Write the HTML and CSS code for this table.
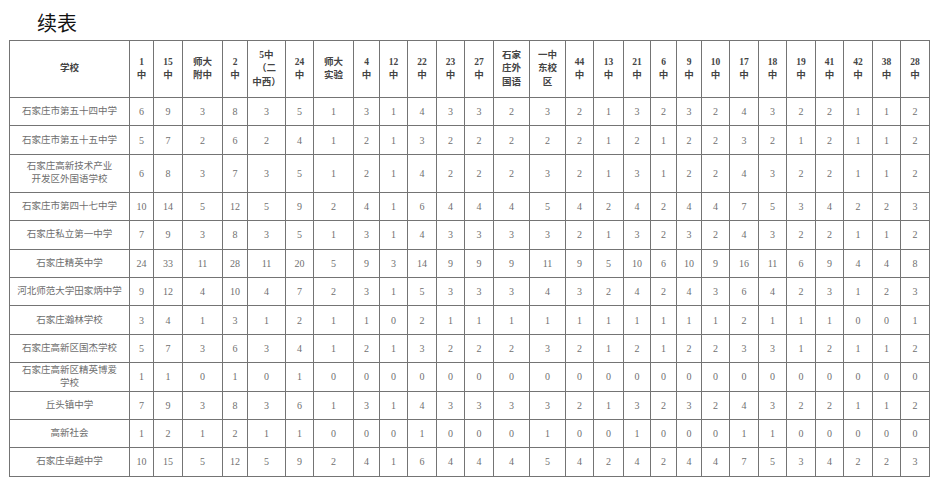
FILE: index.html
```html
<!DOCTYPE html>
<html lang="zh">
<head>
<meta charset="utf-8">
<title>续表</title>
<link rel="stylesheet" href="styles.css">
</head>
<body>
<div class="page">
<div class="title">续表</div>
<table class="grid">
<colgroup>
<col style="width:120px"><col style="width:24px"><col style="width:29px"><col style="width:40px"><col style="width:25px"><col style="width:38px"><col style="width:28px"><col style="width:40px"><col style="width:26px"><col style="width:28px"><col style="width:29px"><col style="width:28px"><col style="width:29px"><col style="width:36px"><col style="width:36px"><col style="width:28px"><col style="width:30px"><col style="width:27px"><col style="width:26px"><col style="width:25px"><col style="width:28px"><col style="width:29px"><col style="width:28px"><col style="width:29px"><col style="width:28px"><col style="width:29px"><col style="width:28px"><col style="width:29px">
</colgroup>
<thead>
<tr class="head">
<th>学校</th><th>1<br>中</th><th>15<br>中</th><th>师大<br>附中</th><th>2<br>中</th><th>5中<br>（二<br>中西）</th><th>24<br>中</th><th>师大<br>实验</th><th>4<br>中</th><th>12<br>中</th><th>22<br>中</th><th>23<br>中</th><th>27<br>中</th><th>石家<br>庄外<br>国语</th><th>一中<br>东校<br>区</th><th>44<br>中</th><th>13<br>中</th><th>21<br>中</th><th>6<br>中</th><th>9<br>中</th><th>10<br>中</th><th>17<br>中</th><th>18<br>中</th><th>19<br>中</th><th>41<br>中</th><th>42<br>中</th><th>38<br>中</th><th>28<br>中</th>
</tr>
</thead>
<tbody>
<tr><td class="name">石家庄市第五十四中学</td><td>6</td><td>9</td><td>3</td><td>8</td><td>3</td><td>5</td><td>1</td><td>3</td><td>1</td><td>4</td><td>3</td><td>3</td><td>2</td><td>3</td><td>2</td><td>1</td><td>3</td><td>2</td><td>3</td><td>2</td><td>4</td><td>3</td><td>2</td><td>2</td><td>1</td><td>1</td><td>2</td></tr>
<tr><td class="name">石家庄市第五十五中学</td><td>5</td><td>7</td><td>2</td><td>6</td><td>2</td><td>4</td><td>1</td><td>2</td><td>1</td><td>3</td><td>2</td><td>2</td><td>2</td><td>2</td><td>2</td><td>1</td><td>2</td><td>1</td><td>2</td><td>2</td><td>3</td><td>2</td><td>1</td><td>2</td><td>1</td><td>1</td><td>2</td></tr>
<tr class="tall"><td class="name">石家庄高新技术产业<br>开发区外国语学校</td><td>6</td><td>8</td><td>3</td><td>7</td><td>3</td><td>5</td><td>1</td><td>2</td><td>1</td><td>4</td><td>2</td><td>2</td><td>2</td><td>3</td><td>2</td><td>1</td><td>3</td><td>1</td><td>2</td><td>2</td><td>4</td><td>3</td><td>2</td><td>2</td><td>1</td><td>1</td><td>2</td></tr>
<tr><td class="name">石家庄市第四十七中学</td><td>10</td><td>14</td><td>5</td><td>12</td><td>5</td><td>9</td><td>2</td><td>4</td><td>1</td><td>6</td><td>4</td><td>4</td><td>4</td><td>5</td><td>4</td><td>2</td><td>4</td><td>2</td><td>4</td><td>4</td><td>7</td><td>5</td><td>3</td><td>4</td><td>2</td><td>2</td><td>3</td></tr>
<tr><td class="name">石家庄私立第一中学</td><td>7</td><td>9</td><td>3</td><td>8</td><td>3</td><td>5</td><td>1</td><td>3</td><td>1</td><td>4</td><td>3</td><td>3</td><td>3</td><td>3</td><td>2</td><td>1</td><td>3</td><td>2</td><td>3</td><td>2</td><td>4</td><td>3</td><td>2</td><td>2</td><td>1</td><td>1</td><td>2</td></tr>
<tr><td class="name">石家庄精英中学</td><td>24</td><td>33</td><td>11</td><td>28</td><td>11</td><td>20</td><td>5</td><td>9</td><td>3</td><td>14</td><td>9</td><td>9</td><td>9</td><td>11</td><td>9</td><td>5</td><td>10</td><td>6</td><td>10</td><td>9</td><td>16</td><td>11</td><td>6</td><td>9</td><td>4</td><td>4</td><td>8</td></tr>
<tr><td class="name">河北师范大学田家炳中学</td><td>9</td><td>12</td><td>4</td><td>10</td><td>4</td><td>7</td><td>2</td><td>3</td><td>1</td><td>5</td><td>3</td><td>3</td><td>3</td><td>4</td><td>3</td><td>2</td><td>4</td><td>2</td><td>4</td><td>3</td><td>6</td><td>4</td><td>2</td><td>3</td><td>1</td><td>2</td><td>3</td></tr>
<tr><td class="name">石家庄瀚林学校</td><td>3</td><td>4</td><td>1</td><td>3</td><td>1</td><td>2</td><td>1</td><td>1</td><td>0</td><td>2</td><td>1</td><td>1</td><td>1</td><td>1</td><td>1</td><td>1</td><td>1</td><td>1</td><td>1</td><td>1</td><td>2</td><td>1</td><td>1</td><td>1</td><td>0</td><td>0</td><td>1</td></tr>
<tr><td class="name">石家庄高新区国杰学校</td><td>5</td><td>7</td><td>3</td><td>6</td><td>3</td><td>4</td><td>1</td><td>2</td><td>1</td><td>3</td><td>2</td><td>2</td><td>2</td><td>3</td><td>2</td><td>1</td><td>2</td><td>1</td><td>2</td><td>2</td><td>3</td><td>3</td><td>1</td><td>2</td><td>1</td><td>1</td><td>2</td></tr>
<tr><td class="name">石家庄高新区精英博爱<br>学校</td><td>1</td><td>1</td><td>0</td><td>1</td><td>0</td><td>1</td><td>0</td><td>0</td><td>0</td><td>0</td><td>0</td><td>0</td><td>0</td><td>0</td><td>0</td><td>0</td><td>0</td><td>0</td><td>0</td><td>0</td><td>0</td><td>0</td><td>0</td><td>0</td><td>0</td><td>0</td><td>0</td></tr>
<tr><td class="name">丘头镇中学</td><td>7</td><td>9</td><td>3</td><td>8</td><td>3</td><td>6</td><td>1</td><td>3</td><td>1</td><td>4</td><td>3</td><td>3</td><td>3</td><td>3</td><td>2</td><td>1</td><td>3</td><td>2</td><td>3</td><td>2</td><td>4</td><td>3</td><td>2</td><td>2</td><td>1</td><td>1</td><td>2</td></tr>
<tr><td class="name">高新社会</td><td>1</td><td>2</td><td>1</td><td>2</td><td>1</td><td>1</td><td>0</td><td>0</td><td>0</td><td>1</td><td>0</td><td>0</td><td>0</td><td>1</td><td>0</td><td>0</td><td>1</td><td>0</td><td>0</td><td>0</td><td>1</td><td>1</td><td>0</td><td>0</td><td>0</td><td>0</td><td>0</td></tr>
<tr><td class="name">石家庄卓越中学</td><td>10</td><td>15</td><td>5</td><td>12</td><td>5</td><td>9</td><td>2</td><td>4</td><td>1</td><td>6</td><td>4</td><td>4</td><td>4</td><td>5</td><td>4</td><td>2</td><td>4</td><td>2</td><td>4</td><td>4</td><td>7</td><td>5</td><td>3</td><td>4</td><td>2</td><td>2</td><td>3</td></tr>
</tbody>
</table>
</div>
</body>
</html>
```

FILE: styles.css
```css
html, body {
  margin: 0;
  padding: 0;
  background: #ffffff;
}

.page {
  padding: 11px 0 0 9px;
}

.title {
  margin-left: 28px;
  height: 24px;
  line-height: 24px;
  font-family: "Noto Sans CJK SC", sans-serif;
  font-size: 20px;
  color: #111;
}

.grid {
  margin-top: 5px;
  width: 921px;
  table-layout: fixed;
  border-collapse: collapse;
  border: 1px solid #8a8a8a;
  font-family: "Liberation Serif", "Noto Sans CJK SC", serif;
}

.grid th,
.grid td {
  border: 1px solid #747474;
  padding: 0;
  text-align: center;
  vertical-align: middle;
}

.grid th {
  font-size: 9.5px;
  line-height: 13.5px;
  font-weight: bold;
  color: #444;
}

.head {
  height: 57px;
}

.grid tbody tr {
  height: 28.4px;
}

.grid tbody tr.tall {
  height: 38px;
}

.grid td {
  font-size: 10px;
  line-height: 13px;
  color: #707070;
}

.grid td.name {
  font-size: 9.5px;
  color: #6e6e6e;
}
```
